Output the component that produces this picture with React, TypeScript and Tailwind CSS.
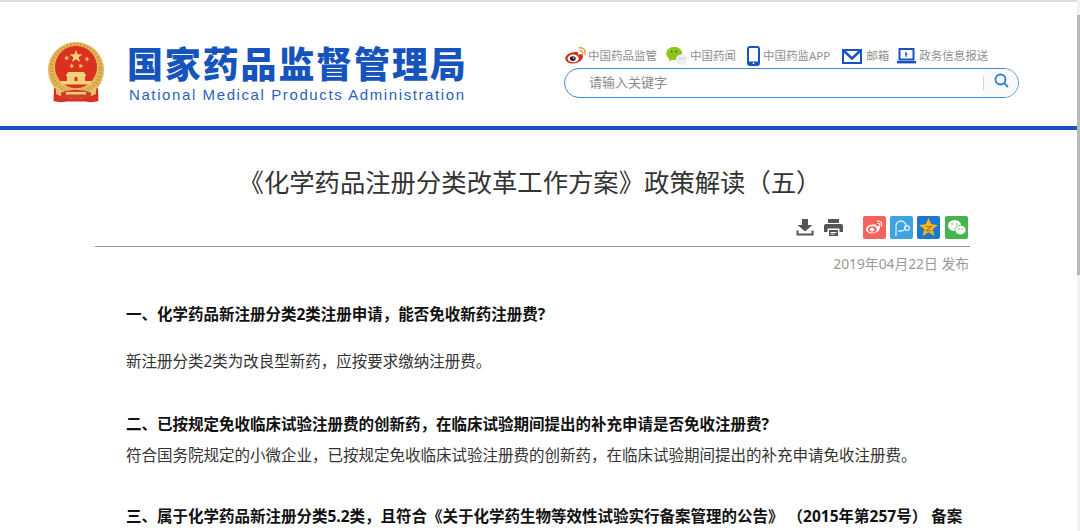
import React from "react";

const base = "font-['Noto_Sans','Noto_Sans_CJK_SC',sans-serif]";

function starPoints(cx: number, cy: number, r: number, rot = 0) {
  const pts: string[] = [];
  for (let i = 0; i < 10; i++) {
    const rad = i % 2 === 0 ? r : r * 0.4;
    const a = -Math.PI / 2 + rot + (i * Math.PI) / 5;
    pts.push(`${(cx + rad * Math.cos(a)).toFixed(2)},${(cy + rad * Math.sin(a)).toFixed(2)}`);
  }
  return pts.join(" ");
}

function Emblem() {
  return (
    <svg width="56" height="61" viewBox="0 0 56 61" className="shrink-0">
      <path d="M6 46 L5.5 59 Q12 61 18 59.5 L38 59.5 Q44 61 50.5 59 L50 46 Z" fill="#d8321f" />
      <circle cx="28" cy="28" r="28" fill="#e3b458" />
      <circle cx="28" cy="27" r="24.5" fill="none" stroke="#cf9a3f" strokeWidth="3" strokeDasharray="1.5 2" />
      <circle cx="28" cy="25" r="21" fill="#d9301f" />
      <g fill="#f3d27c">
        <polygon points={starPoints(28, 14.5, 6.8)} />
        <polygon points={starPoints(18.7, 16, 2.8, -0.4)} />
        <polygon points={starPoints(39, 17, 2.8, 0.4)} />
        <polygon points={starPoints(23.7, 24, 2.8, -0.2)} />
        <polygon points={starPoints(32.7, 24, 2.8, 0.2)} />
        <path d="M20 30 L36 30 L38.5 34 L17.5 34 Z" />
        <rect x="19" y="34" width="18" height="5" />
        <rect x="13" y="39" width="30" height="3.5" />
      </g>
      <rect x="26.5" y="35" width="3" height="4" fill="#d9301f" />
      <path d="M8 44 Q28 60 48 44 L48 52 Q28 62 8 52 Z" fill="#e9c068" />
      <path d="M13 50.5 Q28 45 43 50.5 L43 55 Q28 59 13 55 Z" fill="#d0402c" />
      <path d="M18 50 H38 V52.5 H18 Z" fill="#efca72" />
    </svg>
  );
}

function Weibo({ size = 24, tile = false }: { size?: number; tile?: boolean }) {
  return (
    <svg width={size} height={size} viewBox="0 0 24 24">
      <path d="M10.3 8.2c3-1.2 4.4.4 3.7 2.6 2.6-1 4.6-.6 5 1 .5 3.5-4.4 7.7-10 7.7-4.2 0-7.7-2-7.7-5 0-2.4 3.5-6.6 9-6.3z" fill={tile ? "#fff" : "#d8271c"} />
      <ellipse cx="9.2" cy="14.4" rx="5.6" ry="3.9" fill={tile ? "#f5635d" : "#fff"} />
      <ellipse cx="8.8" cy="14.6" rx="2.9" ry="2.4" fill={tile ? "#fff" : "#222"} />
      {!tile && <circle cx="9.6" cy="14" r=".7" fill="#fff" />}
      <path d="M15.5 3.8c4-.6 6.6 2.8 5.4 6.4M15.8 6.7c2-.3 3.3 1.3 2.7 3.2" stroke={tile ? "#fff" : "#ed9a2c"} strokeWidth="1.4" fill="none" strokeLinecap="round" />
    </svg>
  );
}

function Wechat() {
  return (
    <svg width="22" height="20" viewBox="0 0 22 20">
      <ellipse cx="8.2" cy="7.5" rx="8" ry="6.8" fill="#8fc31f" />
      <path d="M3.5 11 L3 15.5 L7.5 13z" fill="#8fc31f" />
      <circle cx="5.6" cy="5.6" r="1" fill="#4c7a10" />
      <circle cx="10.4" cy="5.6" r="1" fill="#4c7a10" />
      <ellipse cx="15.8" cy="13.5" rx="6" ry="5.2" fill="#eceff0" />
      <circle cx="14" cy="12.5" r=".7" fill="#a5a5a5" />
      <circle cx="17.6" cy="12.5" r=".7" fill="#a5a5a5" />
    </svg>
  );
}

function Phone() {
  return (
    <svg width="13" height="20" viewBox="0 0 13 20">
      <rect x="1" y="1" width="11" height="18" rx="2" fill="#fff" stroke="#1554bd" strokeWidth="2" />
      <rect x="1" y="15.5" width="11" height="3.5" fill="#1554bd" />
      <circle cx="6.5" cy="17.2" r=".9" fill="#fff" />
    </svg>
  );
}

function Mail() {
  return (
    <svg width="20" height="15" viewBox="0 0 20 15">
      <rect x="1" y="1" width="18" height="13" fill="#fff" stroke="#1554bd" strokeWidth="2" />
      <path d="M2 2 L10 9.5 L18 2" fill="none" stroke="#1554bd" strokeWidth="2.4" />
    </svg>
  );
}

function Laptop() {
  return (
    <svg width="19" height="16" viewBox="0 0 19 16">
      <rect x="2.5" y="1" width="14" height="10.5" fill="#fff" stroke="#1554bd" strokeWidth="2" />
      <path d="M8 3.5 L11 6.3 L9.6 6.6 L10 8.8 L8.6 8.8z" fill="#1554bd" />
      <rect x="0" y="13" width="19" height="2.4" fill="#1554bd" />
    </svg>
  );
}

function Download() {
  return (
    <svg width="18" height="18" viewBox="0 0 18 18" fill="#555">
      <path d="M6 1 H12 V7 H16.5 L9 13.5 L1.5 7 H6z" />
      <path d="M0.5 12.5 H2.5 V15.5 H15.5 V12.5 H17.5 V17.5 H0.5z" />
    </svg>
  );
}

function Printer() {
  return (
    <svg width="19" height="18" viewBox="0 0 19 18" fill="#555">
      <path d="M4 1 H15 V5 H4z" />
      <path d="M2 6 H17 Q19 6 19 8 V14 H15.5 V10.5 H3.5 V14 H0 V8 Q0 6 2 6z" />
      <path d="M5 12 H14 V18 H5z" />
      <path d="M6.5 14 H12.5 V15 H6.5z M6.5 15.8 H11 V16.6 H6.5z" fill="#fff" />
    </svg>
  );
}

function ShareTile({ color, className, children }: { color: string; className?: string; children: React.ReactNode }) {
  return (
    <span className={`flex h-[23px] w-[23px] items-center justify-center overflow-hidden rounded-[2px] ${color} ${className ?? ""}`}>
      {children}
    </span>
  );
}

function NavItem({ icon, label, className }: { icon: React.ReactNode; label: string; className?: string }) {
  return (
    <span className={`flex items-center ${className ?? ""}`}>
      {icon}
      <span className="text-[11.5px] leading-none text-[#8f8f8f]">{label}</span>
    </span>
  );
}

export default function App() {
  return (
    <div className={`relative h-[531px] w-[1080px] overflow-hidden bg-white [text-spacing-trim:space-all] ${base}`}>
      <div className="h-[2px] bg-[#dcdcdc]" />
      <header className="flex h-[124px]">
        <div className="ml-[48px] mt-[40px]">
          <Emblem />
        </div>
        <div className="ml-[23px] mt-[45px] w-[341px]">
          <div className="whitespace-nowrap text-[36px] font-black leading-[36px] tracking-[1.85px] text-[#1554bd]">
            国家药品监督管理局
          </div>
          <div className="mt-[4px] whitespace-nowrap pl-[2px] font-['Liberation_Sans',sans-serif] text-[15px] leading-[16px] tracking-[1.6px] text-[#2a62c0]">
            National Medical Products Administration
          </div>
        </div>
        <div className="ml-[96px] mt-[42px] w-[455px]">
          <div className="flex h-[24px] items-center">
            <NavItem icon={<Weibo />} label="中国药品监管" />
            <NavItem className="ml-[9px]" icon={<span className="mr-[2px]"><Wechat /></span>} label="中国药闻" />
            <NavItem className="ml-[11px]" icon={<span className="mr-[3px]"><Phone /></span>} label="中国药监APP" />
            <NavItem className="ml-[12px]" icon={<span className="mr-[4px]"><Mail /></span>} label="邮箱" />
            <NavItem className="ml-[8px]" icon={<span className="mr-[3px]"><Laptop /></span>} label="政务信息报送" />
          </div>
          <div className="flex h-[30px] items-center overflow-hidden rounded-full border border-[#3d8fe0] pl-[24px]">
            <span className="flex-1 text-[13px] text-[#8a8a8a]">请输入关键字</span>
            <span className="flex h-full w-[35px] items-start bg-[#fafafa]">
              <span className="mt-[7px] h-[14px] w-px bg-[#d5d5d5]" />
              <svg width="15" height="15" viewBox="0 0 15 15" fill="none" stroke="#2a7ed3" strokeWidth="1.8" className="ml-[10px] mt-[4px]">
                <circle cx="6.5" cy="6.5" r="5" />
                <path d="M10.2 10.2 L14 14" />
              </svg>
            </span>
          </div>
        </div>
      </header>
      <div className="h-[4px] bg-[#1554bd]" />
      <main className="mx-[95px] w-[875px]">
        <h1 className="mt-[36px] pr-[5px] text-center text-[25.35px] font-normal leading-[32px] text-[#333]">
          《化学药品注册分类改革工作方案》政策解读（五）
        </h1>
        <div className="mt-[16px] flex h-[33px] items-start justify-end border-b border-[#999] pr-[2px]">
          <span className="mr-[10px] mt-[4px]"><Download /></span>
          <span className="mr-[20px] mt-[4px]"><Printer /></span>
          <div className="mt-[2px] flex gap-[4px]">
            <ShareTile color="bg-[#f5635d]">
              <Weibo size={19} tile />
            </ShareTile>
            <ShareTile color="bg-[#3fa3e0]">
              <svg width="20" height="20" viewBox="0 0 20 20" fill="none" stroke="#d6eefb" strokeWidth="1.3">
                <path d="M4 18 V8 A5 5 0 1 1 9 13 H6" />
                <circle cx="15" cy="10" r="2.4" />
              </svg>
            </ShareTile>
            <ShareTile color="bg-[#1a78d0]">
              <svg width="21" height="21" viewBox="0 0 20 20">
                <polygon points="10,1 12.6,7 19,7.5 14,11.6 15.8,18 10,14.6 4.2,18 6,11.6 1,7.5 7.4,7" fill="#f6b61d" />
                <path d="M7.5 9 H12.5 L8 13 H13" stroke="#b5701c" strokeWidth="1" fill="none" />
              </svg>
            </ShareTile>
            <ShareTile color="bg-[#45b649]" className="ml-px">
              <svg width="20" height="18" viewBox="0 0 20 18" fill="#fff">
                <ellipse cx="7.5" cy="6.5" rx="6.5" ry="5.5" />
                <ellipse cx="13.5" cy="11" rx="5.5" ry="4.7" stroke="#45b649" strokeWidth="0.8" />
                <circle cx="5.2" cy="5" r=".8" fill="#45b649" />
                <circle cx="9.6" cy="5" r=".8" fill="#45b649" />
                <circle cx="11.8" cy="10" r=".7" fill="#45b649" />
                <circle cx="15.2" cy="10" r=".7" fill="#45b649" />
              </svg>
            </ShareTile>
          </div>
        </div>
        <div className="mt-[9px] pr-px text-right text-[13.8px] leading-[16px] text-[#999]">2019年04月22日 发布</div>
        <article className="pl-[31px] text-[15.5px] text-[#333]">
          <p className="mt-[31px] font-bold leading-[22px] text-[#111]">一、化学药品新注册分类2类注册申请，能否免收新药注册费?</p>
          <p className="mt-[25px] leading-[22px]">新注册分类2类为改良型新药，应按要求缴纳注册费。</p>
          <p className="mt-[41px] font-bold leading-[22px] text-[#111]">二、已按规定免收临床试验注册费的创新药，在临床试验期间提出的补充申请是否免收注册费?</p>
          <p className="mt-[9px] leading-[22px]">符合国务院规定的小微企业，已按规定免收临床试验注册费的创新药，在临床试验期间提出的补充申请免收注册费。</p>
          <p className="mt-[39px] whitespace-nowrap font-bold leading-[22px] text-[#111]">三、属于化学药品新注册分类5.2类，且符合《关于化学药生物等效性试验实行备案管理的公告》 （2015年第257号） 备案</p>
        </article>
      </main>
      <div className="absolute bottom-0 right-0 top-0 w-[3px] bg-[#f1f1f1] pt-[15px]">
        <div className="h-[260px] bg-[#b9b9b9]" />
      </div>
    </div>
  );
}
